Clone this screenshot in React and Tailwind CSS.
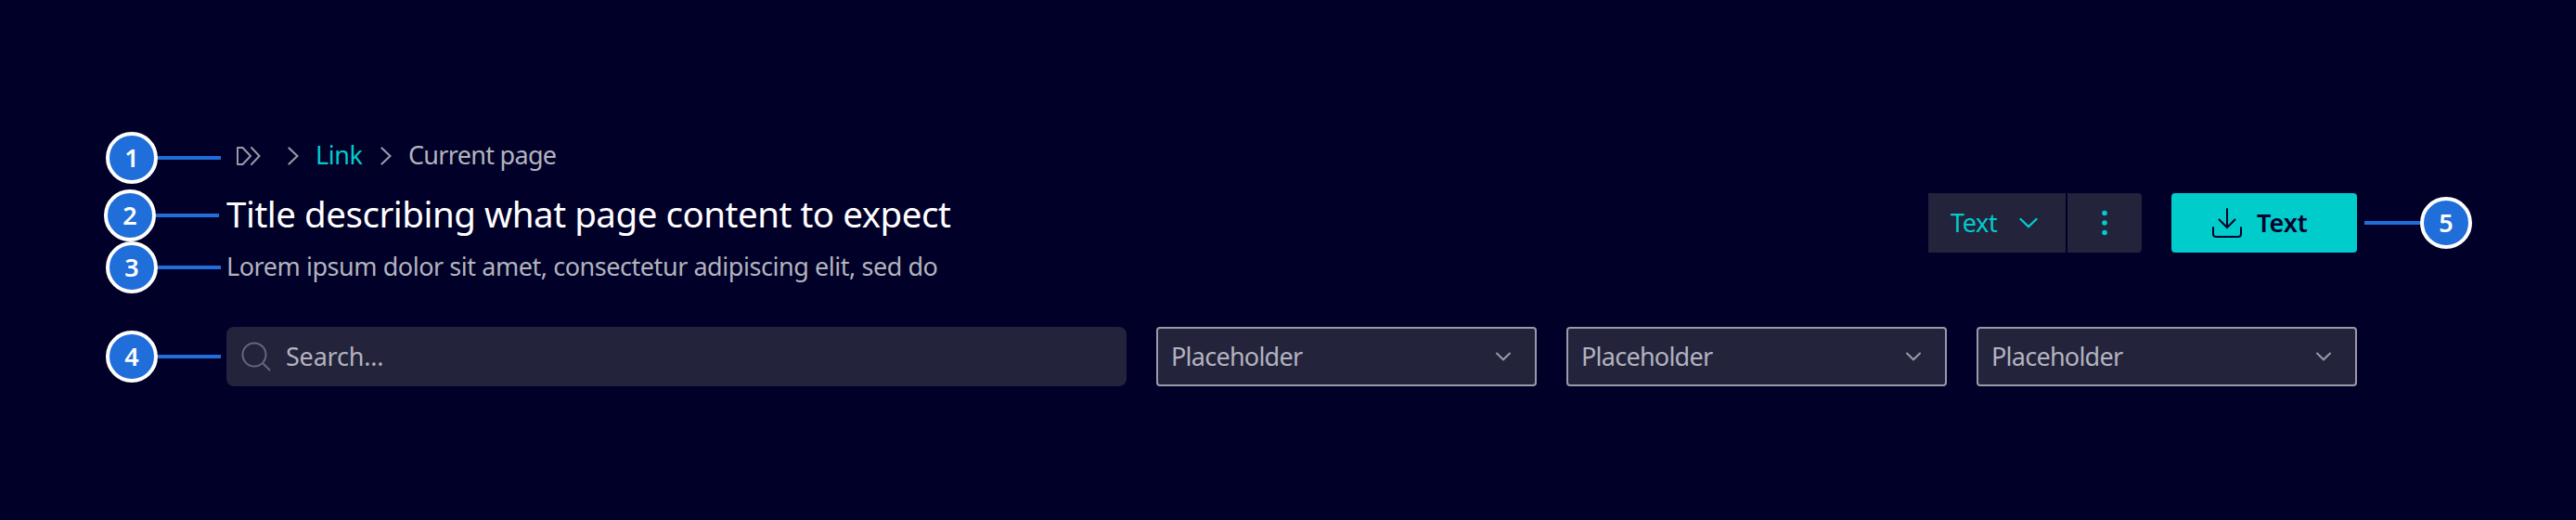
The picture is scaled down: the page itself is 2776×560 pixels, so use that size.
const FONT = "font-['Noto_Sans','Open_Sans',sans-serif]";

function Dot({ n }) {
  return (
    <span className="flex size-14 shrink-0 items-center justify-center rounded-full border-4 border-white bg-[#206ed9] text-[27px] leading-[36px] font-semibold text-white">
      {n}
    </span>
  );
}

function Marker({ n, className = "" }) {
  return (
    <div className={"flex items-center " + className}>
      <Dot n={n} />
      <span className="h-1 w-[68px] bg-[#206ed9]" />
    </div>
  );
}

function Chevron({ className }) {
  return (
    <svg viewBox="0 0 12 20" className={className} fill="none" stroke="currentColor" strokeWidth="2.2" strokeLinecap="round">
      <path d="M1.5 1.5 L10.5 10 L1.5 18.5" />
    </svg>
  );
}

function Select() {
  return (
    <div className="flex h-16 w-[410px] items-center justify-between rounded-[4px] border-2 border-[#9999a9] bg-[#23233c] pr-[25px] pl-[14px] text-[#b3b3be]">
      <span className="text-[27px] leading-[36px] tracking-[-0.75px]">Placeholder</span>
      <svg viewBox="0 0 18 10" className="h-[10px] w-[18px]" fill="none" stroke="#9999a9" strokeWidth="2" strokeLinecap="round">
        <path d="M2 1.5 L9 8.3 L16 1.5" />
      </svg>
    </div>
  );
}

export default function App() {
  return (
    <div className={"flex h-[560px] w-[2776px] bg-[#000028] " + FONT}>
      <aside className="flex w-[244px] shrink-0 flex-col pt-[142px] pl-[112px]">
        <Marker n="1" className="ml-0.5" />
        <Marker n="2" className="mt-1.5" />
        <Marker n="3" className="ml-0.5" />
        <Marker n="4" className="mt-10 ml-0.5" />
      </aside>

      <main className="flex w-[2296px] shrink-0 flex-col pt-[149px]">
        <div className="flex h-[203px] justify-between">
          <header className="flex flex-col">
            <nav className="flex h-9 items-center text-[27px] leading-[36px] tracking-[-0.7px] text-[#b3b3be]">
              <svg viewBox="0 0 28 22" className="mt-0.5 ml-[10px] h-[22px] w-[28px]" fill="none" stroke="#9999a9" strokeWidth="2">
                <path d="M2 2 H7.5 L16 11 L7.5 20 H2 Z" strokeLinejoin="round" />
                <path d="M17 2 L25.5 11 L17 20" strokeLinecap="round" />
              </svg>
              <Chevron className="mt-px ml-[28px] h-5 w-3 text-[#9999a9]" />
              <a className="ml-[18px] w-[53px] text-[#00cccc] tracking-[-0.4px]">Link</a>
              <Chevron className="mt-px ml-[17px] h-5 w-3 text-[#9999a9]" />
              <span className="ml-[18px]">Current page</span>
            </nav>
            <h1 className="mt-[19px] text-[38.5px] leading-[52px] tracking-[-0.48px] text-white">
              Title describing what page content to expect
            </h1>
            <p className="mt-[13px] text-[27px] leading-[36px] tracking-[-0.45px] text-[#b3b3be]">
              Lorem ipsum dolor sit amet, consectetur adipiscing elit, sed do
            </p>
          </header>

          <div className="mt-[59px] flex h-16">
            <button className="flex w-[148px] items-center bg-[#23233c] pl-6 text-[27px] leading-[36px] tracking-[-0.4px] text-[#00cccc]">
              <span className="w-[50px]">Text</span>
              <svg viewBox="0 0 20 12" className="ml-[24px] h-3 w-5" fill="none" stroke="currentColor" strokeWidth="2.4" strokeLinecap="round">
                <path d="M1.5 2 L10 10 L18.5 2" />
              </svg>
            </button>
            <button className="ml-0.5 flex w-20 items-center justify-center rounded-r-[4px] bg-[#23233c]">
              <svg viewBox="0 0 6 28" className="h-7 w-1.5" fill="#00cccc">
                <circle cx="3" cy="3.5" r="2.8" />
                <circle cx="3" cy="14" r="2.8" />
                <circle cx="3" cy="24.5" r="2.8" />
              </svg>
            </button>
            <button className="ml-8 flex w-[200px] items-center rounded-[4px] bg-[#00cccc] pl-[44px] text-[27px] leading-[36px] font-semibold text-[#000028]">
              <svg viewBox="0 0 32 32" className="size-8" fill="none" stroke="currentColor" strokeWidth="2" strokeLinecap="round">
                <path d="M16 1 V21 M7.5 12.5 L16 21 L24.5 12.5" />
                <path d="M1 21 V28 Q1 31 4 31 H28 Q31 31 31 28 V21" />
              </svg>
              <span className="ml-4">Text</span>
            </button>
          </div>
        </div>

        <div className="flex gap-8">
          <div className="flex h-16 w-[970px] items-center rounded-lg bg-[#23233c] pl-4 text-[27px] leading-[36px] tracking-[-0.2px] text-[#b3b3be]">
            <svg viewBox="0 0 32 32" className="size-8" fill="none" stroke="#66667e" strokeWidth="2">
              <circle cx="14" cy="14" r="12.5" />
              <path d="M22.8 22.8 L31 31" />
            </svg>
            <span className="ml-4">Search...</span>
          </div>
          <Select />
          <Select />
          <Select />
        </div>
      </main>

      <aside className="flex items-start pt-[212px] pl-2">
        <div className="flex items-center">
          <span className="h-1 w-[60px] bg-[#206ed9]" />
          <Dot n="5" />
        </div>
      </aside>
    </div>
  );
}
